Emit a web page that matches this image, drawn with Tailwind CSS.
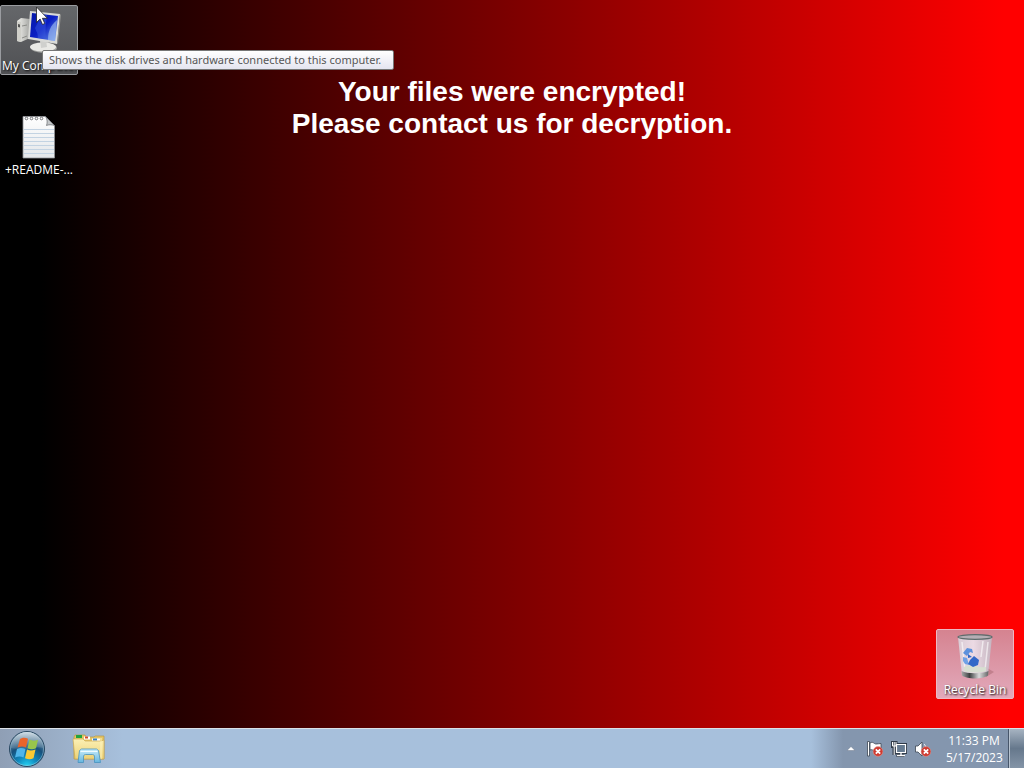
<!DOCTYPE html>
<html lang="en">

<head>
  <meta charset="UTF-8">
  <meta name="viewport" content="width=device-width, initial-scale=1.0">
  <title>Desktop</title>
  <script src="https://cdn.jsdelivr.net/npm/@tailwindcss/browser@4"></script>
</head>

<body class="h-screen flex flex-col overflow-hidden bg-black font-['Open_Sans','Noto_Sans',sans-serif] text-xs text-white">

  <!-- Desktop -->
  <main class="relative flex-1 min-h-0 bg-linear-to-r/srgb from-black from-4% to-[#ff0000] to-98%">
    <h1 class="pt-[76px] text-center font-['Liberation_Sans',Arial,sans-serif] text-[28px] leading-8 font-bold">
      Your files were encrypted!<br>Please contact us for decryption.
    </h1>

    <button aria-label="My Computer" class="absolute left-0 top-[5px] w-[78px] h-[70px] rounded-xs border border-[#9a9ca0] bg-linear-to-b from-[#65676a] to-[#505154] flex flex-col items-center">
      <svg class="w-12 h-12 mt-1 shrink-0" viewBox="0 0 48 48">
        <defs>
          <linearGradient id="screen" x1="0" y1="0" x2="1" y2="1">
            <stop offset="0" stop-color="#0518a8" />
            <stop offset=".5" stop-color="#0b1fc4" />
            <stop offset="1" stop-color="#6f9bea" />
          </linearGradient>
          <linearGradient id="tower" x1="0" y1="0" x2="1" y2="0">
            <stop offset="0" stop-color="#f2f2ee" />
            <stop offset="1" stop-color="#a5a6a3" />
          </linearGradient>
        </defs>
        <path d="M2 11l4-3 9 1v19l-9 4-4-1z" fill="url(#tower)" />
        <path d="M2 11l4 1v20l-4-1z" fill="#d0d0ca" />
        <path d="M3 14l2 .4v3L3 17z" fill="#555" />
        <path d="M7 16l5-1M7 28l5-2" stroke="#8b8c88" />
        <path d="M24 27l9 1 1 8h-8z" fill="#b9bab8" />
        <ellipse cx="29" cy="38" rx="13" ry="5" fill="#9b9c9a" />
        <ellipse cx="28" cy="37" rx="13" ry="4.500" fill="#e9e9e5" />
        <path d="M25 29l6 1 1 7-6 1z" fill="#cfd0cd" />
        <path d="M15 1l30 3-3 30-29-5z" fill="#d9dad7" />
        <path d="M45 4l1 1-3 28-1 1z" fill="#8d8e8c" />
        <path d="M17 3l26 3-3 25-25-4z" fill="url(#screen)" />
        <path d="M20 18c3-6 5-9 7-14l5 1c-1 8-2 14-1 24l-8-1c0-5-2-7-3-10z" fill="#3f5fe0" opacity=".45" />
        <path d="M33 30c0-8 2-14 9-20l-2 21z" fill="#a8c6f4" opacity=".6" />
      </svg>
      <span class="absolute left-px bottom-0 whitespace-nowrap text-shadow-[1px_1px_2px_#000]">My Computer</span>
    </button>

    <button class="absolute left-0 top-[108px] w-[78px] h-[72px] flex flex-col items-center">
      <svg class="w-12 h-12 mt-1 shrink-0" viewBox="0 0 48 48">
        <defs>
          <linearGradient id="paper" x1="0" y1="0" x2="0" y2="1">
            <stop offset="0" stop-color="#fff" />
            <stop offset="1" stop-color="#e3e6e9" />
          </linearGradient>
        </defs>
        <path d="M8 4.500h22.500l9 9v32.500H8z" fill="url(#paper)" stroke="#909398" stroke-width=".8" />
        <path d="M9 17.500h30M9 21.500h30M9 25.500h30M9 29.500h30M9 33.500h30M9 37.500h30M9 41.500h30" stroke="#c3d3e2" />
        <path d="M30.500 4.500l9 9c-3-1-6-1-8 0 1-3 1-6-1-9z" fill="#c4c7c9" stroke="#66696d" stroke-width=".7" />
        <g fill="#fff" stroke="#55585c" stroke-width=".8">
          <circle cx="11.500" cy="6.500" r="1.300" />
          <circle cx="16.500" cy="6.500" r="1.300" />
          <circle cx="21.500" cy="6.500" r="1.300" />
          <circle cx="26.500" cy="6.500" r="1.300" />
        </g>
      </svg>
      <span class="leading-5 text-shadow-[1px_1px_2px_#000]">+README-...</span>
    </button>

    <button aria-label="Recycle Bin" class="absolute right-[10px] bottom-[29px] w-[78px] h-[70px] rounded-xs border border-[#edb9c2] bg-linear-to-b from-[#d58390] to-[#e2a9bb] flex flex-col items-center">
      <svg class="w-12 h-12 mt-1 shrink-0" viewBox="0 0 48 48">
        <defs>
          <linearGradient id="bin" x1="0" y1="0" x2="1" y2="0">
            <stop offset="0" stop-color="#d9d3dc" />
            <stop offset=".45" stop-color="#eee3ec" />
            <stop offset="1" stop-color="#c3bac5" />
          </linearGradient>
          <linearGradient id="binBase" x1="0" y1="0" x2="1" y2="0">
            <stop offset="0" stop-color="#a9a9a9" />
            <stop offset=".3" stop-color="#3e4142" />
            <stop offset=".65" stop-color="#dadada" />
            <stop offset="1" stop-color="#646667" />
          </linearGradient>
        </defs>
        <path d="M36 34l7 4-8 5z" fill="#a76570" opacity=".5" />
        <path d="M7 3l4 38c4 4 22 4 26 0l4-38z" fill="url(#bin)" opacity=".9" />
        <path d="M11 8l3 28M37 8l-3 28M32 7l-2 16" stroke="#fff" stroke-width="1.500" opacity=".6" />
        <path d="M10.500 37c6 3 21 3 27 0l-.5 4.500c-5 4-21 4-26 0z" fill="url(#binBase)" />
        <path d="M13 33c7-5 14 2 22 0v4c-6 2-16 2-22 0z" fill="#d7dfd1" />
        <ellipse cx="24" cy="3" rx="17" ry="2.300" fill="#b5aeb4" stroke="#5e6b6b" stroke-width="1.200" />
        <g fill="#3268c8">
          <path d="M12 19l4-5 5 1 1 4-3-1-3 4z" fill="#5d91dc" />
          <path d="M12 23l4 1 2 7-4-1-2-3z" fill="#70a1e5" />
          <path d="M19 26l4-4 5 4-1 5-5 2-5-3z" />
          <path d="M17 20l4 3-4 1z" />
        </g>
      </svg>
      <span class="absolute bottom-0 whitespace-nowrap text-shadow-[1px_1px_2px_#000]">Recycle Bin</span>
    </button>

    <div role="tooltip" class="absolute left-[42px] top-[50px] h-5 pl-[6px] pr-3 rounded-xs border border-[#767676] bg-linear-to-b from-white to-[#e4e5f0] font-['Noto_Sans',sans-serif] text-[11px] leading-[18px] text-[#575757] whitespace-nowrap">Shows the disk drives and hardware connected to this computer.</div>

    <!-- Mouse pointer -->
    <svg class="absolute left-9 top-[6px] w-3 h-[19px]" viewBox="0 0 12 19">
      <path d="M.5 1v15.500l3.600-3.500 2.400 5.500 2.300-1-2.400-5.200h5z" fill="#fff" stroke="#222" stroke-width=".8" />
    </svg>
  </main>

  <!-- Taskbar -->
  <footer class="h-10 shrink-0 flex items-center border-t border-[#dbe1e8] bg-linear-to-r from-[#8f9fb5] via-[#a7c0dc] via-12% to-[#a7c0dc]">
    <button aria-label="Start" class="ml-2 w-[38px] h-[38px]">
      <svg viewBox="0 0 38 38">
        <defs>
          <radialGradient id="orb" cx=".5" cy="1" r=".95">
            <stop offset="0" stop-color="#27d7f5" />
            <stop offset=".3" stop-color="#108bc0" />
            <stop offset=".62" stop-color="#17507b" />
            <stop offset="1" stop-color="#8ba3b7" />
          </radialGradient>
          <linearGradient id="shine" x1="0" y1="0" x2="0" y2="1">
            <stop offset="0" stop-color="#e0eaf0" stop-opacity=".8" />
            <stop offset="1" stop-color="#7b98ac" stop-opacity=".3" />
          </linearGradient>
        </defs>
        <circle cx="19" cy="19" r="17.500" fill="url(#orb)" stroke="#294861" />
        <circle cx="19" cy="19" r="16.500" fill="none" stroke="#a6cbdc" stroke-width=".7" opacity=".7" />
        <path d="M3 18a16 16 0 0 1 32 0c-8-3-15 3-32 0z" fill="url(#shine)" />
        <path d="M12 9c3-2 5.500-1.500 8-.3l-2 8.800c-3-1.500-5-1.500-8.500 0z" fill="#e9642b" />
        <path d="M21.500 9.500c3 1.500 5 1.500 8.500.2l-2 8.500c-3 1.500-5 1.200-8.500 0z" fill="#98c64b" />
        <path d="M9 19c3-1.500 5.500-1.200 8.500 0l-2 8.500c-3-1.500-5-1.200-8.500 0z" fill="#4fb5ea" />
        <path d="M19 19.500c3 1.500 5 1.300 8.500 0l-2 8.800c-3 1.500-5 1.300-8.500 0z" fill="#fac934" />
      </svg>
    </button>
    <button aria-label="Windows Explorer" class="ml-[26px] w-[34px] h-8">
      <svg viewBox="0 0 34 32">
        <defs>
          <linearGradient id="folder" x1="0" y1="0" x2="0" y2="1">
            <stop offset="0" stop-color="#fbf0b4" />
            <stop offset="1" stop-color="#ecd278" />
          </linearGradient>
          <linearGradient id="stand" x1="0" y1="0" x2="0" y2="1">
            <stop offset="0" stop-color="#c9eefb" />
            <stop offset="1" stop-color="#65b5de" />
          </linearGradient>
        </defs>
        <path d="M2 4l1-2h10l1 2h8l1-1h9v23H2z" fill="#e3c566" stroke="#b99a45" stroke-width=".7" />
        <path d="M4 2h6v3H4z" fill="#20a33e" />
        <path d="M12 3.500h6v3h-6z" fill="#fff" />
        <path d="M13 3.500h3v2h-3z" fill="#d44a2b" />
        <path d="M20 5.500h8v3h-8z" fill="#fff" />
        <path d="M21 5.500h4v2h-4z" fill="#3482c9" />
        <path d="M1 6h10l2 2h16l3-1v19H3z" fill="url(#folder)" stroke="#cbab53" stroke-width=".7" />
        <path d="M29 5v21" stroke="#fff3b9" />
        <path d="M6 29.500l1.500-12 2-1.500h15l2 1.500 2 12h-6V24c0-2-1-2.500-2-2.500h-7c-1 0-2 .5-2 2.500v5.500z" fill="url(#stand)" stroke="#4793bf" stroke-width=".8" />
        <path d="M8.500 18.500h17" stroke="#effbff" />
      </svg>
    </button>

    <div class="ml-auto self-stretch flex items-center bg-linear-to-r from-[#a7c0dc] to-[#8496ae] to-15%">
      <button aria-label="Show hidden icons" class="ml-9 w-2">
        <svg class="w-2 h-[5px]" viewBox="0 0 8 5">
          <path d="M0 4.500L4 .5l4 4z" fill="#fff" stroke="#596678" stroke-width=".4" />
        </svg>
      </button>
      <button aria-label="Action Center" class="ml-3 size-4">
        <svg viewBox="0 0 16 16">
          <path d="M.5.500h2v14.500h-2z" fill="#fff" stroke="#3b4552" stroke-width=".8" />
          <path d="M3 2c3-2 4 1 6 1s3-.5 5-.5v7c-3 0-4 1-6 .5S5 8 3 9z" fill="#fff" stroke="#3b4552" stroke-width=".8" />
          <circle cx="11" cy="10.500" r="4.900" fill="#cf3a30" stroke="#e3a29c" stroke-width=".5" />
          <path d="M8.800 8.300l4.400 4.400M13.200 8.300l-4.400 4.400" stroke="#fff" stroke-width="1.700" />
        </svg>
      </button>
      <button aria-label="Network" class="ml-2 size-4">
        <svg viewBox="0 0 16 16">
          <path d="M5 3.500h9.500v8H5zM10 12v2M5.500 14.500h8" fill="#667b91" stroke="#303b49" stroke-width="3" />
          <path d="M0 0h6.500v7H4.500v7h-3V7H0z" fill="#303b49" />
          <path d="M5.500 3.500h9v8h-9z" fill="#667b91" stroke="#fff" stroke-width="1.200" />
          <path d="M10 12v2M6 14.500h8" stroke="#fff" stroke-width="1.300" />
          <path d="M1.500 1v4h3.500V1M3.200 1v4M3.200 5v9" fill="none" stroke="#fff" />
        </svg>
      </button>
      <button aria-label="Volume" class="ml-2 size-4">
        <svg viewBox="0 0 16 16">
          <path d="M.5 5h2.500l4-4v14l-4-4H.5z" fill="#fff" stroke="#3b4552" stroke-width=".8" />
          <path d="M9 3c1 1 1.500 2 1.500 3" fill="none" stroke="#fff" />
          <circle cx="11" cy="10.500" r="4.900" fill="#cf3a30" stroke="#e3a29c" stroke-width=".5" />
          <path d="M8.800 8.300l4.400 4.400M13.200 8.300l-4.400 4.400" stroke="#fff" stroke-width="1.700" />
        </svg>
      </button>
      <button class="ml-[15px] w-14 whitespace-nowrap text-center leading-[17px]">11:33 PM<br>5/17/2023</button>
      <button aria-label="Show desktop" class="ml-[6px] w-4 self-stretch border-l border-[#47566a] bg-linear-to-b from-[#a7b4c2] via-[#66788c] to-[#8495a7] shadow-[inset_1px_0_0_#b7c3d0]"></button>
    </div>
  </footer>

</body>

</html>
